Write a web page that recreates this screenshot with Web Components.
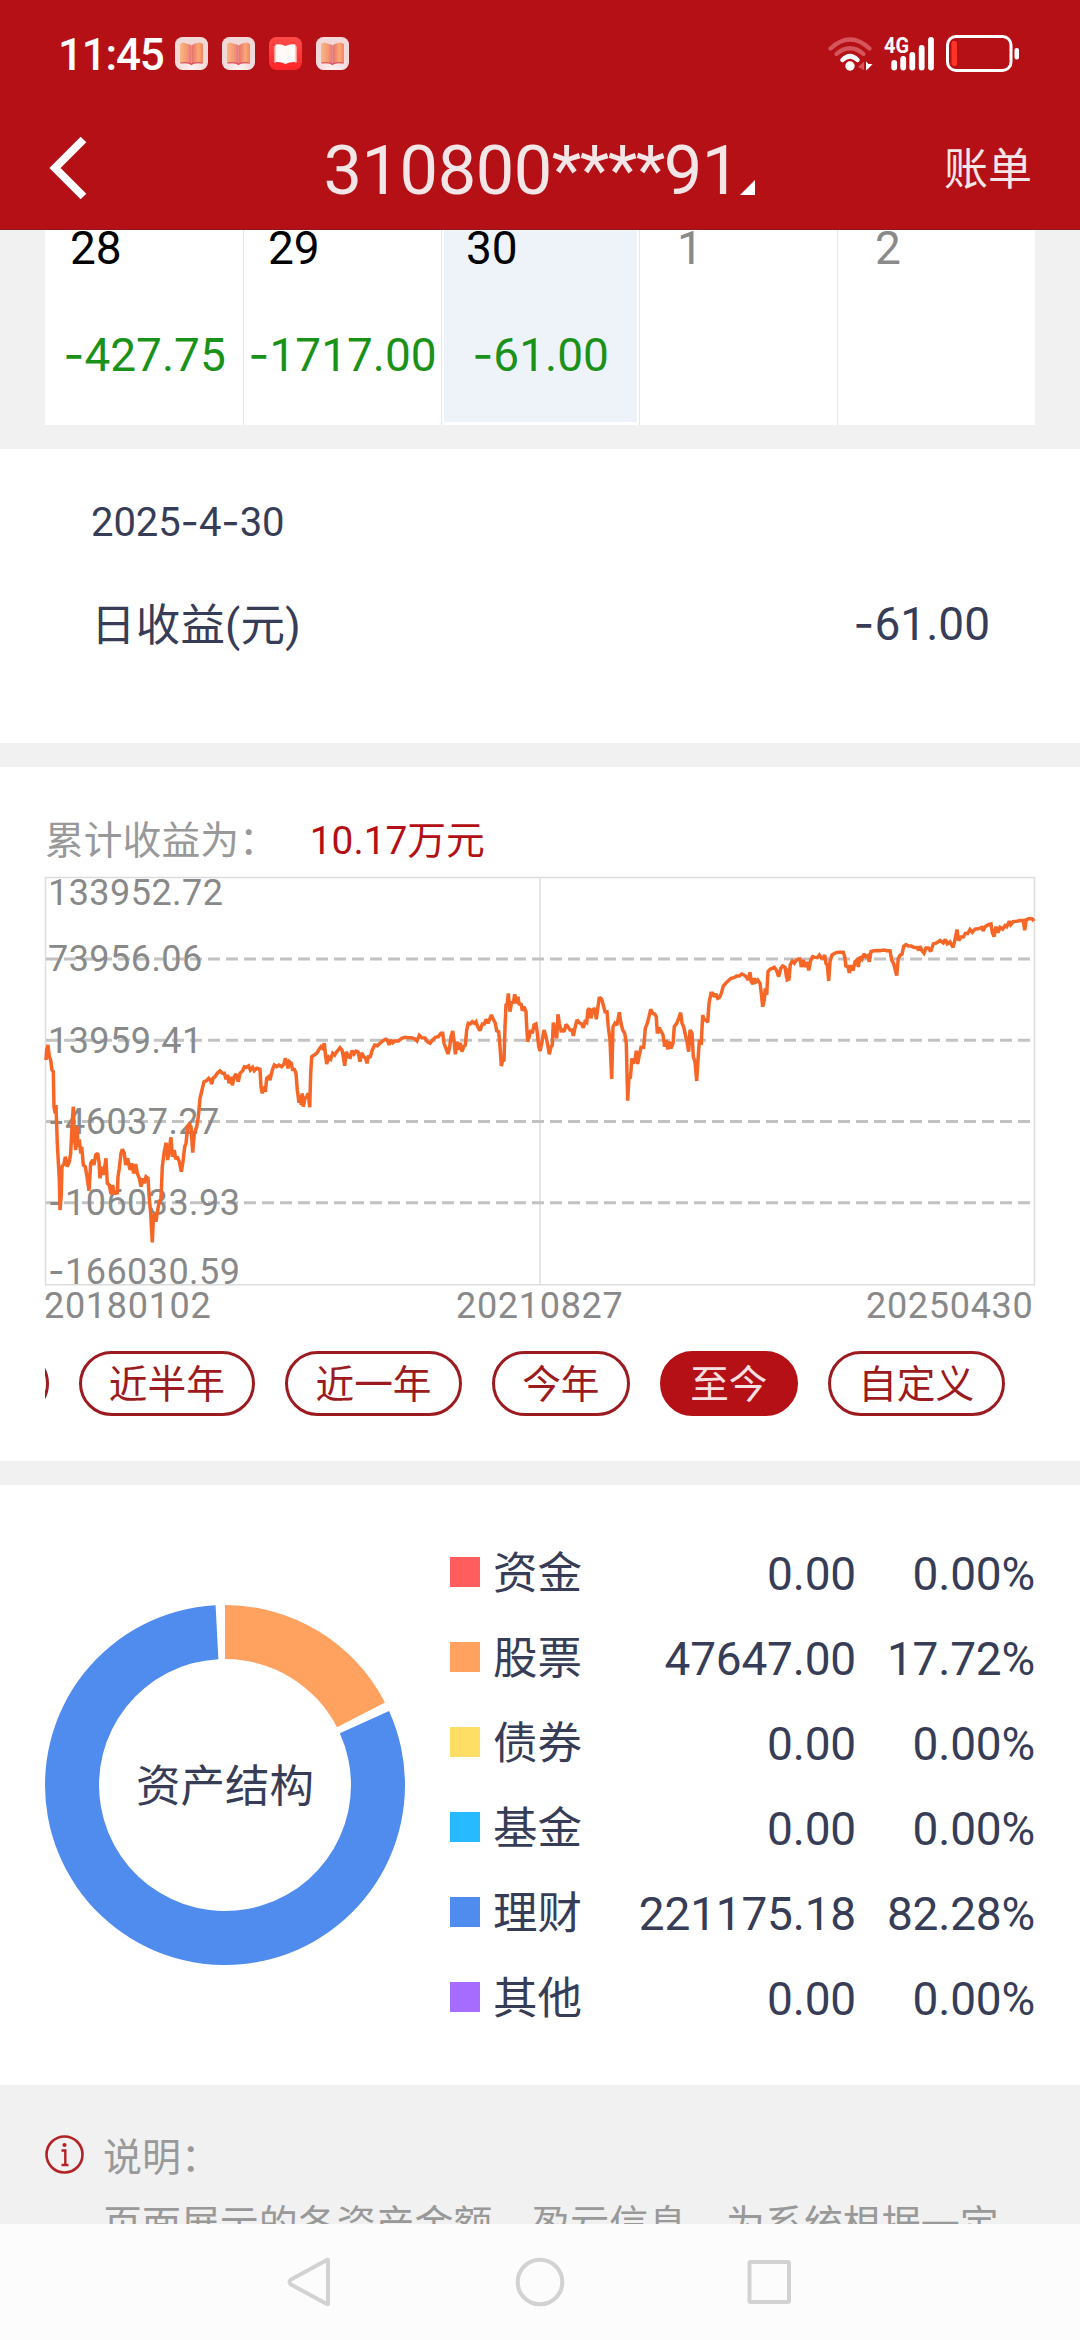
<!DOCTYPE html>
<html lang="zh-CN">
<head>
<meta charset="utf-8">
<title>账单</title>
<style>
html,body{margin:0;padding:0}
body{width:1080px;height:2340px;overflow:hidden;background:#f1f1f1;font-family:Roboto,"Noto Sans CJK SC",sans-serif;color:#373d56}
</style>
</head>
<body>
<account-page></account-page>
<script>
const define = (name, css, html, ready) => customElements.define(name, class extends HTMLElement {
  connectedCallback() {
    if (this.shadowRoot) return;
    const root = this.attachShadow({ mode: 'open' });
    root.innerHTML = '<style>*{box-sizing:border-box}' + css + '</style>' + (typeof html === 'function' ? html(this) : html);
    if (ready) ready(root, this);
  }
});

// Amounts and dates: the minus sign is set in a face with a wider dash.
const num = s => s.replace(/-/g, '<span class="m">-</span>');
const minus = '.m{font-family:Inter,sans-serif;letter-spacing:0}';

define('app-badge', ':host{display:block;width:33px;height:33px}svg{display:block}', el => el.hasAttribute('red')
  ? `<svg width="33" height="33" viewBox="0 0 33 33"><defs><linearGradient id="r" x2="0" y2="1"><stop stop-color="#ff4b49"/><stop offset="1" stop-color="#fd2529"/></linearGradient></defs><rect width="33" height="33" rx="7.5" fill="url(#r)"/><path d="M5 10Q4 9 7 9V26Q4 26 5 23ZM28 10Q29 9 26 9V26Q29 26 28 23Z" fill="#ff9c96"/><path d="M6.5 9V7.5Q12 6.5 16.5 9Q21 6.5 26.5 7.5V25Q21 24.500 16.500 27Q12 24.500 6.500 25Z" fill="#fff9f7"/></svg>`
  : `<svg width="33" height="33" viewBox="0 0 33 33"><defs><linearGradient id="a"><stop stop-color="#f9b781"/><stop offset=".6" stop-color="#f39a77"/><stop offset="1" stop-color="#e87478"/></linearGradient><linearGradient id="b"><stop stop-color="#e66f70"/><stop offset=".6" stop-color="#fba873"/><stop offset="1" stop-color="#ee8566"/></linearGradient><radialGradient id="c" cy="1"><stop stop-color="#fff4f3"/><stop offset="1" stop-color="#f1d9d9"/></radialGradient></defs><rect width="33" height="33" rx="7.500" fill="url(#c)"/><path d="M5 7L8 5.500L16.500 8V27.500L13 26L5 26.500Z" fill="url(#a)"/><path d="M28 7L25 5.500Q18 6 16.500 9V27.500L20 26L28 26.500Z" fill="url(#b)"/><path d="M5.500 26Q14 25 16.500 27.500Q19 25 27.500 26" fill="none" stroke="#dd5360" stroke-width="1.200"/></svg>`);

define('status-bar', `:host{display:flex;align-items:center;height:107px;padding:0 60px 0 58px;color:#fff}
.t{width:117px;font:500 44px/44px Roboto,sans-serif;letter-spacing:-1.2px;margin-top:3px}
.apps{display:flex;gap:14px;flex:1}svg{display:block}`,
`<div class="t">11:45</div><div class="apps"><app-badge></app-badge><app-badge></app-badge><app-badge red></app-badge><app-badge></app-badge></div>
<svg width="195" height="44" viewBox="824 32 195 44" fill="none" stroke-linecap="round">
<path d="M829.500 48.500Q849 30.500 868.500 48.500M835.500 54Q849 42.500 862.500 54" stroke="#d6545c" stroke-width="4.200"/>
<path d="M841.500 60Q849 52.500 856.500 60" stroke="#fff" stroke-width="4.500"/><circle cx="849" cy="66" r="4.700" fill="#fff"/>
<path d="M857 67L863 61.500V70Z" fill="#d6545c"/><path d="M865 61.500L867.500 64H871.500L868 68L865 70.500Z" fill="#fff"/>
<text x="883" y="53.200" fill="#fff" font-family="Roboto" font-weight="700" font-size="22.500" textLength="25" lengthAdjust="spacingAndGlyphs">4G</text>
<path d="M893.200 63V67.500M902.200 59V67.500M911.300 55V67.500M920.700 48V67.500M930 40V67.500" stroke="#fff" stroke-width="5.800"/>
<rect x="946.500" y="36.500" width="63.500" height="34" rx="8.500" stroke="#fff" stroke-width="3"/><rect x="950.500" y="41" width="5.500" height="25" rx="2" fill="#ff3426"/><rect x="1013.500" y="48" width="4.500" height="11.500" rx="2" fill="#fff"/></svg>`);

define('title-bar', `:host{display:flex;align-items:center;height:123px;padding:0 48px 0 45px;border-bottom:1px solid #8d1a20;color:#f4e6e7}
svg{display:block}.n{display:flex;align-items:flex-end;justify-content:space-between;width:431.500px;margin-left:230.500px}.n b{font:400 68.5px/80px Roboto,sans-serif;letter-spacing:-.45px;margin-top:5px}.n i{font-style:normal;letter-spacing:-1.500px}.n svg{margin-bottom:16px}
.r{font-size:44px;line-height:50px;margin:3px 0 0 auto}`,
`<svg width="48" height="66" viewBox="45 135 48 66"><path d="M83.500 139.500L55 168L83.500 196.500" fill="none" stroke="#fff" stroke-width="8"/></svg>
<div class="n"><b>310800<i>****</i>91</b><svg width="15" height="15"><path d="M15 0V15H0Z" fill="#fff"/></svg></div><div class="r">账单</div>`);

define('day-cell', `:host{display:block;flex:1 1 0;height:195px;background:#fff;text-align:center;border-left:1.5px solid #e6e6e6;font-size:46px;line-height:46px;color:#000}
:host(:first-child){border-left-color:#fff}:host([off]){color:#8a8a8a}
.c{height:192px;margin:0 2px 0 2px}:host([sel]) .c{background:#eef3fa}
.d{text-align:left;padding-left:22px;height:36.600px;line-height:36.600px}:host([off]) .d{padding-left:35px}.v{margin:64px -10px 0;color:#1a9118;white-space:nowrap}` + minus,
  el => `<div class="c"><div class="d">${el.getAttribute('day')}</div><div class="v">${num(el.getAttribute('value') || '')}</div></div>`);

define('day-income', `:host{display:block;height:294px;background:#fff;padding:53.300px 90px 0 91px}
.d{font-size:40px;line-height:40px;letter-spacing:-.1px}.r{display:flex;justify-content:space-between;align-items:center;margin-top:56.500px;height:46px}.l{font-size:44.500px;letter-spacing:.2px;margin-top:-2px}.v{font-size:46px}` + minus,
`<div class="d">${num('2025-4-30')}</div><div class="r"><span class="l">日收益(元)</span><span class="v">${num('-61.00')}</span></div>`);

const vertices = [
  [30, 860, 3, '48,600 50,570 54,555 58,590 62,600 66,630 70,635 72,740 76,760 78,735 82,850 88,960 90,1050 94,1005 96,920 102,912 106,890 112,920 118,905 122,880 126,800 130,740 133,830 137,870 141,800 144,860 148,838 152,880 155,860 160,915 166,920 171,950 177,992 182,910 188,900 192,915 197,885 203,880 207,905 210,955 216,920 220,945 224,920 228,895 232,970 238,975 243,1003 248,975 253,1003 258,995 262,1003 264,950 268,925 273,880 277,868 283,880 287,915 293,895 300,930 305,910 311,940 317,912 322,940 328,955 333,980 338,955 343,970 348,950 354,955 358,1015 362,1060 367,1147 370,1080 374,1060 378,1085 383,1050 388,1025 393,1015 397,920 402,880 408,848 413,900 418,865 423,832 427,890 433,870 437,898 442,890 448,905 454,935 459,905 464,860 468,850 473,800 478,792 483,800 488,878 493,820 500,800 505,770 510,715 516,690 522,665 530,662 536,655 541,660 545,672 549,655 555,650 562,640 570,633 577,640 583,640 588,658 593,645 597,670 602,650 607,676 613,650 618,642 625,665 630,640 638,632 643,620 650,622 656,618 661,630 668,622 673,632 680,625 690,628 693,680 697,700 702,680 706,695 710,655 716,650 720,660 727,630 733,615 740,620 747,615 755,620 762,612 766,595 772,615'],
  [280, 860, 3, '24,625 28,605 34,610 38,632 42,625 48,640 52,690 57,728 61,705 64,735 67,700 70,740 75,715 80,710 85,700 89,742 92,640 95,590 103,585 110,580 116,570 123,560 128,565 133,550 137,590 140,612 146,592 152,598 158,580 164,585 170,575 175,570 180,563 186,570 190,590 194,617 199,575 205,590 211,592 216,572 222,582 228,573 234,575 240,605 245,578 251,590 257,595 261,610 265,590 271,590 277,570 284,555 292,557 300,550 309,542 317,538 322,540 327,555 332,540 338,548 345,543 355,543 365,535 375,532 385,533 395,533 405,537 411,543 418,526 425,533 435,534 442,545 450,550 458,540 466,532 475,530 483,520 488,520 492,550 498,565 504,582 509,560 513,530 518,513 522,540 526,583 531,545 536,570 541,548 546,575 551,560 556,555 560,510 565,490 571,492 577,485 583,490 588,485 593,500 600,512 607,492 613,492 618,478 624,490 630,475 634,465 640,478 646,490 650,512 656,515 660,560 664,618 668,600 672,600 675,500 678,435 682,430 685,400 690,455 695,425 700,430 704,403 710,430 714,410 718,435 723,430 727,452 732,440 738,455 740,500 743,545 748,530 752,510 757,520 762,495 768,492 772,520 776,560'],
  [530, 860, 3, '30,573 35,550 42,510 48,530 53,555 58,583 63,560 67,555 70,488 75,510 80,535 84,463 88,490 93,512 98,510 103,515 108,493 114,500 120,510 126,510 130,528 136,500 141,480 148,488 155,492 160,503 165,485 170,488 174,450 178,445 183,475 188,450 194,445 199,478 204,440 208,412 215,418 220,435 225,455 231,455 235,500 240,540 245,657 249,500 255,490 261,495 268,457 273,490 278,510 284,520 289,550 291,640 293,722 297,650 301,655 306,595 310,610 315,600 319,572 323,612 328,585 333,562 341,562 346,505 352,490 357,470 362,448 368,460 374,462 379,470 382,520 388,503 394,515 399,525 404,560 409,540 413,568 418,545 423,565 429,550 433,500 440,490 446,475 452,458 456,490 461,500 465,520 470,540 476,575 480,510 486,520 490,590 495,605 500,663 504,600 508,545 514,548 518,465 523,480 528,480 533,487 537,430 543,400 548,400 553,410 558,402 563,415 569,412 574,400 580,378 587,370 595,362 603,355 612,353 620,348 628,348 635,342 642,345 650,352 655,360 660,337 664,365 669,372 673,355 678,365 683,360 690,370 694,400 698,440 703,420 706,385 710,405 714,335 720,328 727,325 733,322 739,330 746,350 752,325 758,318 765,322 770,355 773,325'],
  [780, 800, 2.904, '22,522 27,520 31,478 37,468 43,474 48,466 55,462 60,462 64,485 70,465 76,485 81,470 86,495 92,465 98,455 105,457 112,458 118,450 123,458 129,460 134,450 138,475 142,480 146,525 150,470 156,450 163,446 170,443 180,442 190,442 194,455 198,485 203,480 208,502 214,480 219,495 225,470 231,465 235,485 240,455 246,462 252,447 257,455 263,452 268,470 273,440 282,438 292,437 300,438 312,436 320,438 330,438 335,465 341,475 350,510 355,460 361,450 366,448 371,425 378,420 385,424 393,424 402,428 410,428 416,436 420,425 426,438 432,445 438,430 445,430 452,440 460,418 470,415 480,408 490,415 496,405 502,418 510,412 519,428 524,410 531,376 536,408 543,398 550,398 556,388 563,388 570,376 577,384 585,375 595,374 605,370 610,380 615,368 625,362 633,360 637,385 642,397 648,368 654,385 660,370 668,375 675,365 680,368 688,352 692,362 700,353 710,352 720,350 730,350 734,378 739,348 748,344 757,345 762,352']
];
const curve = vertices.map(([ox, oy, k, s]) => s.split(' ').map(p => {
  const [x, y] = p.split(',');
  return (ox + x / 3).toFixed(1) + ',' + (oy + y / k).toFixed(1);
}).join(' ')).join(' ');

define('income-chart', `:host{display:block}svg{display:block}text{font-family:Roboto,sans-serif;font-size:36px;fill:#898989}.m{font-family:Inter,sans-serif}`, () => {
  const rows = [[904.7, '133952.72'], [970.500, '73956.06'], [1052.500, '13959.41'], [1134, '-46037.27'], [1214.500, '-106033.93'], [1284.300, '-166030.59']];
  const labels = rows.map(([y, t]) => `<text x="48" y="${y}" letter-spacing=".45">${t.replace('-', '<tspan class="m">-</tspan>')}</text>`).join('');
  const grid = [959, 1040.300, 1121.500, 1202.700].map(y => `<path d="M46 ${y}H1031" stroke="#c2c2c2" stroke-width="3" stroke-dasharray="12 6"/>`).join('');
  return `<svg width="1080" height="450" viewBox="0 872 1080 450" fill="none">
<path d="M45.500 877.500H1034.500V1284.700H45.500ZM540 877.500V1284.700" stroke="#dcdcdc" stroke-width="1.400"/>${grid}${labels}
<g letter-spacing=".7"><text x="44" y="1317.700">20180102</text><text x="456" y="1317.700">20210827</text><text x="866" y="1317.700">20250430</text></g>
<polyline points="${curve}" stroke="#f66627" stroke-width="3.500" stroke-linejoin="miter" stroke-miterlimit="2"/></svg>`;
});

define('range-pill', `:host{display:flex;flex:none;align-items:center;justify-content:center;width:176.700px;height:65px;border:3px solid #9c1b20;border-radius:33px;color:#9c1b20;font-size:38.700px;line-height:40px;padding-top:2px;background:#fff}
:host([short]){width:138px}:host([on]){background:#b41016;border-color:#b41016;color:#f9e0e2}`, '<slot></slot>');

define('total-income', `:host{display:block;height:694px;background:#fff}
.h{display:flex;height:105px;padding:53.500px 45px 0;font-size:38.800px;line-height:40px;color:#999}.h b{font-weight:400;color:#b40f14;margin-left:32px}
.p{display:flex;gap:30px;margin:29px 45px 0;overflow:hidden}range-pill:first-child{margin-left:-173.200px}`,
`<div class="h"><span>累计收益为：</span><b>10.17万元</b></div><income-chart></income-chart>
<div class="p"><range-pill></range-pill><range-pill>近半年</range-pill><range-pill>近一年</range-pill><range-pill short>今年</range-pill><range-pill short on>至今</range-pill><range-pill>自定义</range-pill></div>`);

define('legend-row', `:host{display:flex;align-items:center;height:85px;font-size:46px;line-height:50px}
i{width:30px;height:30px;margin-right:13px}.l{font-size:44.500px;width:100px;padding-top:4px}.v{flex:1;text-align:right;padding-top:3px;letter-spacing:-.2px}.p{width:179px;text-align:right;padding-top:3px;letter-spacing:-.2px}`,
  el => `<i style="background:${el.getAttribute('c')}"></i><span class="l">${el.getAttribute('l')}</span><span class="v">${el.getAttribute('v')}</span><span class="p">${el.getAttribute('p')}</span>`);

define('asset-ring', `:host{display:block;width:360px;height:360px}svg{display:block}text{font-family:"Noto Sans CJK SC",sans-serif;font-size:44.500px;fill:#373d56}`, () => {
  const at = (r, deg) => { const a = deg * Math.PI / 180; return (180 + r * Math.sin(a)).toFixed(2) + ' ' + (180 - r * Math.cos(a)).toFixed(2); };
  const arc = (a, b, c) => { const big = b - a > 180 ? 1 : 0; return `<path fill="${c}" d="M${at(180, a)}A180 180 0 ${big} 1 ${at(180, b)}L${at(126, b)}A126 126 0 ${big} 0 ${at(126, a)}Z"/>`; };
  return `<svg width="360" height="360">${arc(0, 62.700, '#ffa15f')}${arc(65.700, 357, '#508cee')}<text x="180" y="196.500" text-anchor="middle">资产结构</text></svg>`;
});

define('asset-panel', `:host{display:flex;height:600px;background:#fff;padding:0 45px}asset-ring{margin-top:120px}.g{flex:1;margin:44.500px 0 0 45px}`,
`<asset-ring></asset-ring><div class="g"><legend-row c="#ff5d5e" l="资金" v="0.00" p="0.00%"></legend-row><legend-row c="#ffa15f" l="股票" v="47647.00" p="17.72%"></legend-row><legend-row c="#ffde66" l="债券" v="0.00" p="0.00%"></legend-row><legend-row c="#27baff" l="基金" v="0.00" p="0.00%"></legend-row><legend-row c="#508cee" l="理财" v="221175.18" p="82.28%"></legend-row><legend-row c="#a56cff" l="其他" v="0.00" p="0.00%"></legend-row></div>`);

define('page-note', `:host{display:flex;height:139px;overflow:hidden;padding:40px 45px 0;font-size:38.950px;line-height:67.300px;color:#999}svg{display:block;flex:none;margin:10px 19px 0 0}div{white-space:nowrap}`,
`<svg width="39" height="39" viewBox="0 0 39 39"><circle cx="19.500" cy="19.500" r="18" fill="none" stroke="#b22226" stroke-width="2.600"/><circle cx="19.500" cy="10" r="2.100" fill="#b22226"/><path d="M16.500 15.500H20.300V29.500M16.500 30H23.500" fill="none" stroke="#b22226" stroke-width="2.400"/></svg><div>说明：<br>页面展示的各资产金额、盈亏信息，为系统根据一定</div>`);

define('system-nav', ':host{display:flex;justify-content:center;height:116px;background:#fcfcfc;padding-top:30px}svg{display:block}',
`<svg width="520" height="56" viewBox="280 2254 520 56" fill="none" stroke="#d2d2d2" stroke-width="4" stroke-linejoin="round"><path d="M328 2260.500V2303.500Q328 2305 326 2303.500L291 2284.500Q288 2282 291 2279.500L326 2260.500Q328 2259 328 2260.500Z"/><circle cx="540" cy="2282" r="22.300"/><rect x="749.500" y="2262" width="39.500" height="40" rx="1"/></svg>`);

define('account-page', `:host{display:flex;flex-direction:column;width:1080px;height:2340px;background:#f1f1f1}
.top{background:#b41016}.cal{display:flex;height:219px;padding:0 45px}day-income,total-income,asset-panel{flex:none}total-income,asset-panel{margin-top:24px}`,
`<div class="top"><status-bar></status-bar><title-bar></title-bar></div>
<div class="cal"><day-cell day="28" value="-427.75"></day-cell><day-cell day="29" value="-1717.00"></day-cell><day-cell day="30" value="-61.00" sel></day-cell><day-cell day="1" off></day-cell><day-cell day="2" off></day-cell></div>
<day-income></day-income><total-income></total-income><asset-panel></asset-panel><page-note></page-note><system-nav></system-nav>`);
</script>
</body>
</html>
